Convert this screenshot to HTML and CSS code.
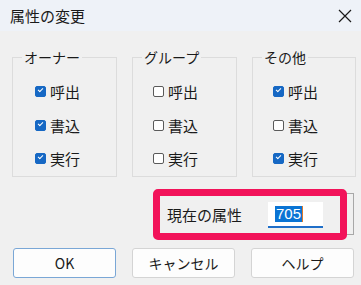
FILE: index.html
```html
<!DOCTYPE html>
<html lang="ja">
<head>
    <meta charset="UTF-8">
    <meta name="viewport" content="width=device-width, initial-scale=1.0">
    <link rel="stylesheet" href="styles.css">
</head>
<body>
    <div class="dialog">
        <!-- タイトルバー -->
        <div class="titlebar">
            <span class="title">属性の変更</span>
            <span class="close">
                <svg width="14" height="14" viewBox="0 0 14 14"><path d="M1 1L13 13M13 1L1 13" stroke="#1a1a1a" stroke-width="1.2" fill="none"/></svg>
            </span>
        </div>

        <div class="groups">
            <fieldset class="group">
                <legend>オーナー</legend>
                <div class="rows">
                    <label class="row"><span class="box checked"></span>呼出</label>
                    <label class="row"><span class="box checked"></span>書込</label>
                    <label class="row"><span class="box checked"></span>実行</label>
                </div>
            </fieldset>
            <fieldset class="group">
                <legend>グループ</legend>
                <div class="rows rows-narrow">
                    <label class="row"><span class="box"></span>呼出</label>
                    <label class="row"><span class="box"></span>書込</label>
                    <label class="row"><span class="box"></span>実行</label>
                </div>
            </fieldset>
            <fieldset class="group group-last">
                <legend>その他</legend>
                <div class="rows rows-narrow">
                    <label class="row"><span class="box checked"></span>呼出</label>
                    <label class="row"><span class="box"></span>書込</label>
                    <label class="row"><span class="box checked"></span>実行</label>
                </div>
            </fieldset>
        </div>

        <div class="attr-frame">
            <span class="attr-label">現在の属性</span>
            <span class="attr-input"><span class="sel">705</span><span class="caret"></span></span>
            <div class="highlight"></div>
        </div>

        <div class="buttons">
            <button class="btn btn-default">OK</button>
            <button class="btn">キャンセル</button>
            <button class="btn">ヘルプ</button>
        </div>
    </div>
</body>
</html>
```

FILE: styles.css
```css
body {
    margin: 0;
    padding: 0;
    background-color: #f0f0f0;
    font-family: "Noto Sans CJK JP", "Noto Sans", sans-serif;
    color: #1a1a1a;
}

.dialog {
    width: 361px;
    height: 285px;
    overflow: hidden;
}

.titlebar {
    height: 31px;
    background-color: #eef2f8;
    display: flex;
    align-items: center;
    justify-content: space-between;
    padding: 0 9px 0 10px;
}

.title {
    font-size: 15px;
}

.close {
    display: flex;
    margin-top: 1px;
}

.groups {
    display: flex;
    gap: 15px;
    padding-left: 12px;
    margin-top: 19px;
}

.group {
    margin: 0;
    padding: 0;
    width: 105px;
    height: 127px;
    box-sizing: border-box;
    border: 1px solid #dcdcdc;
    border-radius: 0;
}

.group-last {
    width: 104px;
}

.group legend {
    font-size: 14px;
    padding: 0 2px;
    margin-left: 9px;
    line-height: 14px;
}

.rows {
    padding: 11px 0 0 22px;
}

.rows-narrow {
    padding-left: 20px;
}

.row {
    display: flex;
    align-items: center;
    height: 33.5px;
    font-size: 15px;
}

.box {
    width: 9px;
    height: 9px;
    border: 1px solid #5a5a5a;
    border-radius: 2px;
    background-color: #ffffff;
    margin-right: 4px;
    position: relative;
}

.box.checked {
    background-color: #1668c4;
    border-color: #1668c4;
}

.box.checked::after {
    content: "";
    position: absolute;
    left: 2px;
    top: 1px;
    width: 4px;
    height: 2px;
    border-left: 1px solid #ffffff;
    border-bottom: 1px solid #ffffff;
    transform: rotate(-45deg);
}

.attr-frame {
    position: relative;
    margin: 16px 0 0 158px;
    width: 196px;
    height: 42px;
    box-sizing: border-box;
    border: 1px solid #a8a8a8;
    display: flex;
    align-items: center;
    padding-left: 8px;
}

.attr-label {
    font-size: 15px;
    width: 101px;
}

.attr-input {
    width: 55px;
    height: 26px;
    background-color: #ffffff;
    border-bottom: 2px solid #1f6fc9;
    box-sizing: border-box;
    display: flex;
    align-items: center;
    padding-left: 7px;
    margin-top: 2px;
}

.sel {
    background-color: #0a74d4;
    color: #ffffff;
    font-family: "Liberation Sans", Arial, sans-serif;
    font-size: 15px;
    line-height: 16px;
    padding: 0 1px;
}

.caret {
    width: 1px;
    height: 16px;
    background-color: #e07a2a;
}

/* 注釈の赤枠 */
.highlight {
    position: absolute;
    left: -6px;
    top: -5px;
    width: 194px;
    height: 51px;
    box-sizing: border-box;
    border: 7px solid #f2135a;
    border-radius: 5px;
}

.buttons {
    display: flex;
    gap: 16px;
    padding-left: 13px;
    margin-top: 13px;
}

.btn {
    width: 103px;
    height: 30px;
    background-color: #fdfdfd;
    border: 1px solid #d4d4d4;
    border-radius: 3px;
    font-family: "Noto Sans CJK JP", "Noto Sans", sans-serif;
    font-size: 14px;
    color: #1a1a1a;
    padding: 0;
}

.btn-default {
    border-color: #7aa7d6;
}
```
